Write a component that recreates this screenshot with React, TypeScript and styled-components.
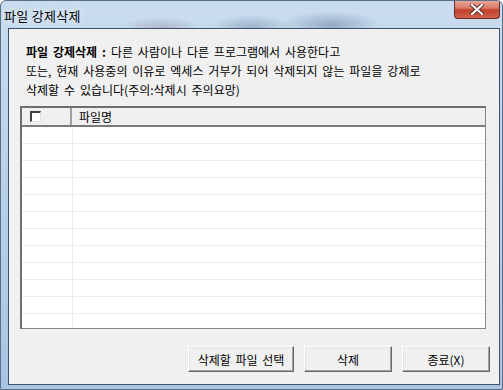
import React from "react";
import styled, { createGlobalStyle } from "styled-components";

const Global = createGlobalStyle`
  html, body { margin: 0; padding: 0; }
  body { width: 503px; height: 390px; overflow: hidden; font-family: "Noto Sans CJK KR", "Noto Sans", sans-serif; }
`;

const Frame = styled.div`
  width: 503px;
  height: 390px;
  box-sizing: border-box;
  display: flex;
  flex-direction: column;
  background:
    radial-gradient(ellipse 40px 12px at 250px 26px, rgba(80,100,130,0.35), transparent),
    radial-gradient(ellipse 50px 14px at 330px 24px, rgba(60,80,120,0.35), transparent),
    radial-gradient(ellipse 40px 10px at 160px 26px, rgba(120,110,130,0.3), transparent),
    linear-gradient(180deg, #c9dcef 0%, #bcd2ea 40%, #a9c4e3 100%);
  border: 1px solid #5a6f88;
  border-radius: 6px 6px 0 0;
  overflow: hidden;
`;

const TitleBar = styled.div`
  height: 28px;
  display: flex;
  align-items: flex-start;
  justify-content: space-between;
  padding: 0 2px 0 3px;
`;

const TitleText = styled.div`
  margin-top: 7px;
  font-size: 13px;
  line-height: 15px;
  letter-spacing: 0.3px;
  color: #000;
  text-shadow: 0 0 6px rgba(255,255,255,0.9);
`;

const CloseButton = styled.div`
  width: 46px;
  height: 19px;
  margin-top: -1px;
  box-sizing: border-box;
  border: 1px solid #6b2b22;
  border-top: none;
  border-radius: 0 0 4px 4px;
  background: linear-gradient(180deg, #e8a99c 0%, #d77c68 45%, #c2412b 55%, #d2604a 100%);
  display: flex;
  align-items: center;
  justify-content: center;
`;

const Client = styled.div`
  flex: 1;
  margin: 0 2px 4px 7px;
  border: 1px solid #3f5166;
  background: #f0f0f0;
  display: flex;
  flex-direction: column;
  padding: 13px 13px 12px 11px;
`;

const Description = styled.div`
  padding-left: 6px;
  font-size: 12px;
  line-height: 19px;
  color: #000;
  word-spacing: 2.2px;
`;

const Strong = styled.b`
  font-weight: 700;
`;

const Table = styled.div`
  margin-top: 7px;
  height: 223px;
  box-sizing: border-box;
  border: 1px solid #828790;
  border-left: 2px solid #6e6e6e;
  border-top: 2px solid #6e6e6e;
  background: #fff;
  display: flex;
  flex-direction: column;
  overflow: hidden;
`;

const HeaderRow = styled.div`
  height: 17px;
  display: flex;
  background: #f0f0f0;
  border-bottom: 2px solid #7a7a7a;
  flex-shrink: 0;
`;

const HeaderCell = styled.div<{ $w?: number }>`
  ${(p) => (p.$w ? `width: ${p.$w}px;` : "flex: 1;")}
  box-sizing: border-box;
  display: flex;
  align-items: center;
  padding-left: ${(p) => (p.$w ? 8 : 7)}px;
  font-size: 12px;
  color: #000;
  border-right: ${(p) => (p.$w ? "2px solid #a0a0a0" : "none")};
`;

const CheckBox = styled.div`
  width: 11px;
  height: 11px;
  box-sizing: border-box;
  border-left: 2px solid #404040;
  border-top: 2px solid #404040;
  border-right: 1px solid #e0e0e0;
  border-bottom: 1px solid #e0e0e0;
  background: #fff;
`;

const BodyRow = styled.div`
  height: 17px;
  flex-shrink: 0;
  display: flex;
  border-bottom: 1px solid #ececec;
  box-sizing: border-box;
`;

const BodyCell = styled.div<{ $w?: number }>`
  ${(p) => (p.$w ? `width: ${p.$w}px;` : "flex: 1;")}
  border-right: ${(p) => (p.$w ? "1px solid #ececec" : "none")};
`;

const ButtonRow = styled.div`
  margin-top: 17px;
  display: flex;
  justify-content: flex-end;
  gap: 10px;
  margin-right: -4px;
`;

const Button = styled.button<{ $w: number }>`
  width: ${(p) => p.$w}px;
  height: 26px;
  box-sizing: border-box;
  background: #f0f0f0;
  border: 1px solid;
  border-color: #ffffff #696969 #696969 #ffffff;
  box-shadow: inset -1px -1px 0 #a0a0a0, inset 1px 1px 0 #e3e3e3;
  font-family: "Noto Sans CJK KR", "Noto Sans", sans-serif;
  font-size: 12px;
  word-spacing: 2px;
  color: #000;
  padding: 0;
  display: flex;
  align-items: center;
  justify-content: center;
`;

const rows = Array.from({ length: 12 });

export default function App() {
  return (
    <>
      <Global />
      <Frame>
        <TitleBar>
          <TitleText>파일 강제삭제</TitleText>
          <CloseButton>
            <svg width="14" height="11" viewBox="0 0 14 11">
              <path d="M2 1 L12 10 M12 1 L2 10" stroke="#5a2a22" strokeWidth="4" strokeLinecap="square" />
              <path d="M2 1 L12 10 M12 1 L2 10" stroke="#ffffff" strokeWidth="2.2" strokeLinecap="square" />
            </svg>
          </CloseButton>
        </TitleBar>
        <Client>
          <Description>
            <Strong>파일 강제삭제 :</Strong> 다른 사람이나 다른 프로그램에서 사용한다고
            <br />
            또는, 현재 사용중의 이유로 엑세스 거부가 되어 삭제되지 않는 파일을 강제로
            <br />
            삭제할 수 있습니다(주의:삭제시 주의요망)
          </Description>
          <Table>
            <HeaderRow>
              <HeaderCell $w={50}>
                <CheckBox />
              </HeaderCell>
              <HeaderCell>파일명</HeaderCell>
            </HeaderRow>
            {rows.map((_, i) => (
              <BodyRow key={i}>
                <BodyCell $w={50} />
                <BodyCell />
              </BodyRow>
            ))}
          </Table>
          <ButtonRow>
            <Button $w={106}>삭제할 파일 선택</Button>
            <Button $w={88}>삭제</Button>
            <Button $w={88}>종료(X)</Button>
          </ButtonRow>
        </Client>
      </Frame>
    </>
  );
}
